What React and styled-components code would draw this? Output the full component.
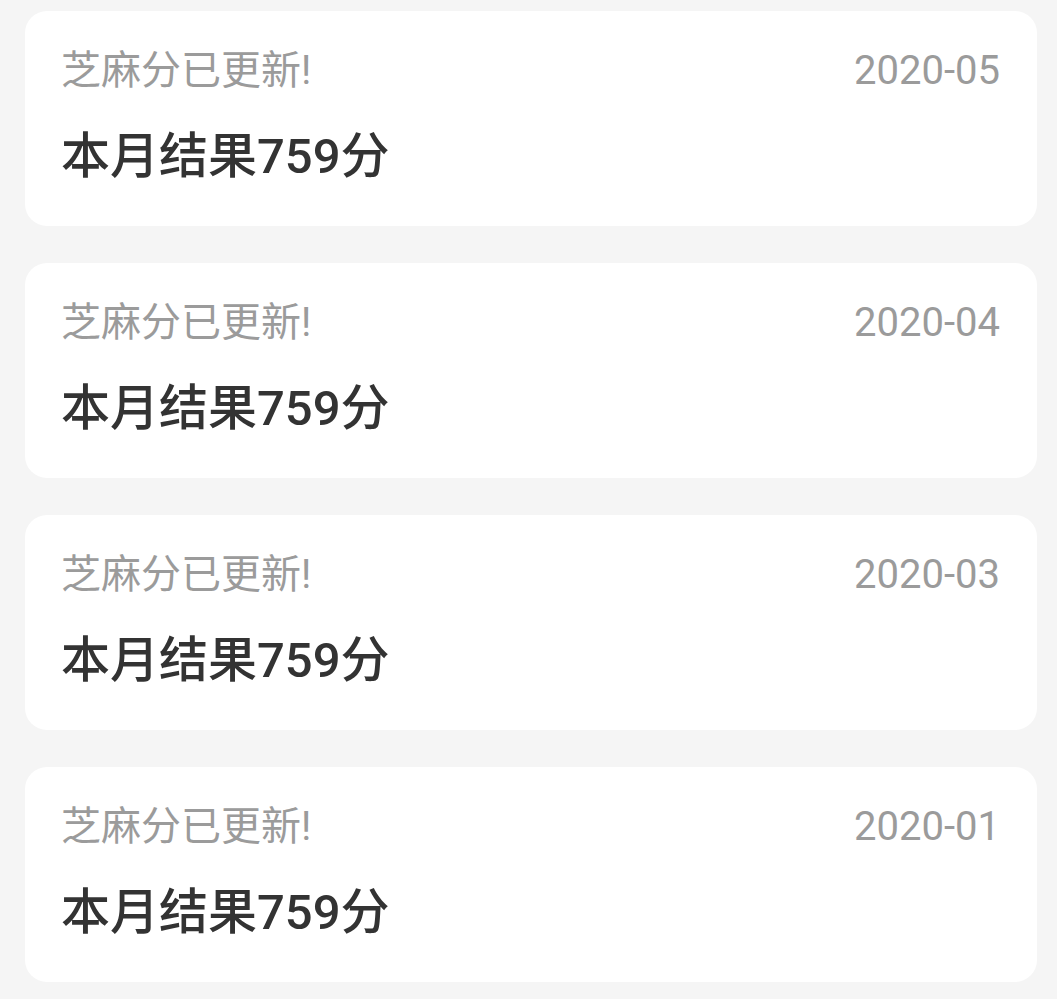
import React from "react";
import styled, { createGlobalStyle } from "styled-components";

const Global = createGlobalStyle`
  html, body { margin: 0; padding: 0; background: #f5f5f5; }
  body { font-family: Roboto, "Noto Sans CJK SC", sans-serif; }
`;

const Page = styled.div`
  display: flex;
  flex-direction: column;
  gap: 37px;
  padding: 11px 20px 20px 25px;
  background: #f5f5f5;
  min-height: 999px;
  box-sizing: border-box;
`;

const Card = styled.div`
  background: #ffffff;
  border-radius: 22px;
  padding: 36px 37px 38px 36px;
  display: flex;
  flex-direction: column;
  gap: 31px;
`;

const Header = styled.div`
  display: flex;
  justify-content: space-between;
  align-items: center;
`;

const Title = styled.span`
  font-size: 40px;
  line-height: 48px;
  color: #9b9b9b;
`;

const DateText = styled.span`
  font-size: 40px;
  line-height: 48px;
  color: #9b9b9b;
`;

const Result = styled.div`
  font-size: 49px;
  line-height: 62px;
  font-weight: 500;
  color: #333333;
`;

const items = ["2020-05", "2020-04", "2020-03", "2020-01"];

export default function App() {
  return (
    <>
      <Global />
      <Page>
        {items.map((d) => (
          <Card key={d}>
            <Header>
              <Title>芝麻分已更新!</Title>
              <DateText>{d}</DateText>
            </Header>
            <Result>本月结果759分</Result>
          </Card>
        ))}
      </Page>
    </>
  );
}
